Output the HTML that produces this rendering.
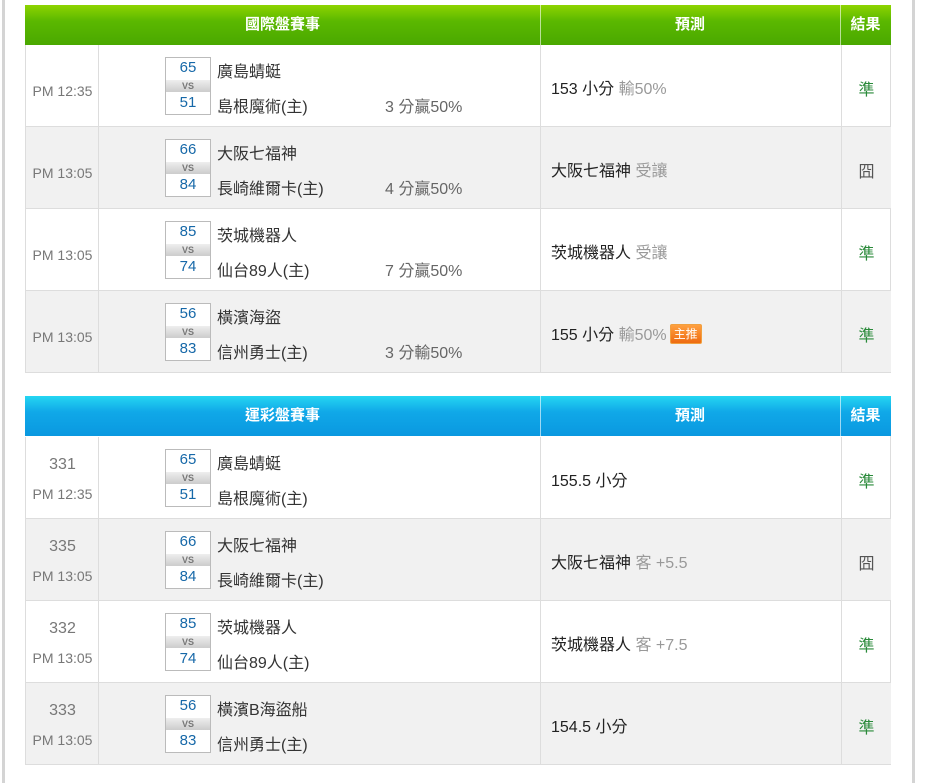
<!DOCTYPE html><html><head><meta charset="utf-8"><style>
body{margin:0;width:950px;height:783px;background:#fff;position:relative;overflow:hidden;font-family:"Liberation Sans","Noto Sans CJK TC",sans-serif;}
.vl{position:absolute;top:0;height:783px;width:3px;background:#d4d4d4}
.tbl{position:absolute;left:25px;width:865px;border-right:1px solid #ddd}
.hd{position:absolute;left:0;width:866px;height:40px;color:#fff;font-weight:bold;font-size:15px}
.hd div{position:absolute;top:0;height:40px;line-height:40px;text-align:center;border-right:1px solid rgba(255,255,255,.6)}
.g{background:linear-gradient(#8ed400 0,#5bb800 40%,#4aa800 100%)}
.b{background:linear-gradient(#25d6f2 0,#10a8e8 40%,#0a98e0 100%)}
.row{position:absolute;left:0;width:865px;height:81px;border-bottom:1px solid #ddd;border-left:1px solid #ddd}
.row.alt{background:#f1f1f1}
.c{position:absolute;top:0;height:81px;border-right:1px solid #ddd}
.tm{position:absolute;left:0;width:73px;text-align:center;color:#777;font-size:14px}
.box{position:absolute;left:139px;top:12px;width:44px;height:56px;border:1px solid #bbb;background:#fff}
.s{position:absolute;left:0;width:44px;height:20px;text-align:center;color:#1668a8;font-size:15px;line-height:20px}
.vs{position:absolute;left:0;top:22px;width:44px;height:12px;background:linear-gradient(#eee,#ccc);color:#777;font-size:9px;font-weight:bold;text-align:center;line-height:12px}
.nm{position:absolute;left:191px;font-size:16px;color:#333}
.hc{position:absolute;left:359px;font-size:16px;color:#666}
.pr{position:absolute;left:525px;font-size:16px;color:#222;top:30px}
.pr span{color:#999}
.rs{position:absolute;left:816px;width:49px;text-align:center;top:31px;font-size:16px}
.ok{color:#2a8a3a}.bad{color:#555}
.pr .tag{display:inline-block;background:linear-gradient(#ffa040,#ee6a10);color:#fff;font-size:12px;padding:0 3px;border-radius:2px;line-height:18px;vertical-align:2px;margin-left:3px;border:1px solid #f0a040}
</style></head><body>
<div class="vl" style="left:2px"></div><div class="vl" style="left:912px"></div>

<div class="tbl" style="top:5px;height:368px">
<div class="hd g" style="top:0"><div style="left:0;width:515px">國際盤賽事</div><div style="left:515px;width:300px">預測</div><div style="left:816px;width:49px;border:none">結果</div></div>
</div>

<div class="tbl" style="top:396px;height:369px">
<div class="hd b" style="top:0"><div style="left:0;width:515px">運彩盤賽事</div><div style="left:515px;width:300px">預測</div><div style="left:816px;width:49px;border:none">結果</div></div>
</div>

<div class="row" style="top:45px;left:25px"><div class="c" style="left:0;width:72px"></div><div class="c" style="left:0;width:514px"></div><div class="c" style="left:0;width:815px"></div>
<div class="tm" style="top:38px">PM 12:35</div>
<div class="box"><div class="s" style="top:0">65</div><div class="vs">VS</div><div class="s" style="top:35px">51</div></div>
<div class="nm" style="top:13px">廣島蜻蜓</div><div class="nm" style="top:48px">島根魔術(主)</div><div class="hc" style="top:48px">3 分贏50%</div>
<div class="pr">153 小分 <span>輸50%</span></div><div class="rs ok">準</div></div>

<div class="row alt" style="top:127px;left:25px"><div class="c" style="left:0;width:72px"></div><div class="c" style="left:0;width:514px"></div><div class="c" style="left:0;width:815px"></div>
<div class="tm" style="top:38px">PM 13:05</div>
<div class="box"><div class="s" style="top:0">66</div><div class="vs">VS</div><div class="s" style="top:35px">84</div></div>
<div class="nm" style="top:13px">大阪七福神</div><div class="nm" style="top:48px">長崎維爾卡(主)</div><div class="hc" style="top:48px">4 分贏50%</div>
<div class="pr">大阪七福神 <span>受讓</span></div><div class="rs bad">囧</div></div>

<div class="row" style="top:209px;left:25px"><div class="c" style="left:0;width:72px"></div><div class="c" style="left:0;width:514px"></div><div class="c" style="left:0;width:815px"></div>
<div class="tm" style="top:38px">PM 13:05</div>
<div class="box"><div class="s" style="top:0">85</div><div class="vs">VS</div><div class="s" style="top:35px">74</div></div>
<div class="nm" style="top:13px">茨城機器人</div><div class="nm" style="top:48px">仙台89人(主)</div><div class="hc" style="top:48px">7 分贏50%</div>
<div class="pr">茨城機器人 <span>受讓</span></div><div class="rs ok">準</div></div>

<div class="row alt" style="top:291px;left:25px"><div class="c" style="left:0;width:72px"></div><div class="c" style="left:0;width:514px"></div><div class="c" style="left:0;width:815px"></div>
<div class="tm" style="top:38px">PM 13:05</div>
<div class="box"><div class="s" style="top:0">56</div><div class="vs">VS</div><div class="s" style="top:35px">83</div></div>
<div class="nm" style="top:13px">橫濱海盜</div><div class="nm" style="top:48px">信州勇士(主)</div><div class="hc" style="top:48px">3 分輸50%</div>
<div class="pr">155 小分 <span>輸50%</span><span class="tag">主推</span></div><div class="rs ok">準</div></div>

<div class="row" style="top:437px;left:25px"><div class="c" style="left:0;width:72px"></div><div class="c" style="left:0;width:514px"></div><div class="c" style="left:0;width:815px"></div>
<div class="tm" style="top:19px;font-size:16px">331</div><div class="tm" style="top:49px">PM 12:35</div>
<div class="box"><div class="s" style="top:0">65</div><div class="vs">VS</div><div class="s" style="top:35px">51</div></div>
<div class="nm" style="top:13px">廣島蜻蜓</div><div class="nm" style="top:48px">島根魔術(主)</div>
<div class="pr">155.5 小分</div><div class="rs ok">準</div></div>

<div class="row alt" style="top:519px;left:25px"><div class="c" style="left:0;width:72px"></div><div class="c" style="left:0;width:514px"></div><div class="c" style="left:0;width:815px"></div>
<div class="tm" style="top:19px;font-size:16px">335</div><div class="tm" style="top:49px">PM 13:05</div>
<div class="box"><div class="s" style="top:0">66</div><div class="vs">VS</div><div class="s" style="top:35px">84</div></div>
<div class="nm" style="top:13px">大阪七福神</div><div class="nm" style="top:48px">長崎維爾卡(主)</div>
<div class="pr">大阪七福神 <span>客 +5.5</span></div><div class="rs bad">囧</div></div>

<div class="row" style="top:601px;left:25px"><div class="c" style="left:0;width:72px"></div><div class="c" style="left:0;width:514px"></div><div class="c" style="left:0;width:815px"></div>
<div class="tm" style="top:19px;font-size:16px">332</div><div class="tm" style="top:49px">PM 13:05</div>
<div class="box"><div class="s" style="top:0">85</div><div class="vs">VS</div><div class="s" style="top:35px">74</div></div>
<div class="nm" style="top:13px">茨城機器人</div><div class="nm" style="top:48px">仙台89人(主)</div>
<div class="pr">茨城機器人 <span>客 +7.5</span></div><div class="rs ok">準</div></div>

<div class="row alt" style="top:683px;left:25px"><div class="c" style="left:0;width:72px"></div><div class="c" style="left:0;width:514px"></div><div class="c" style="left:0;width:815px"></div>
<div class="tm" style="top:19px;font-size:16px">333</div><div class="tm" style="top:49px">PM 13:05</div>
<div class="box"><div class="s" style="top:0">56</div><div class="vs">VS</div><div class="s" style="top:35px">83</div></div>
<div class="nm" style="top:13px">橫濱B海盜船</div><div class="nm" style="top:48px">信州勇士(主)</div>
<div class="pr">154.5 小分</div><div class="rs ok">準</div></div>
</body></html>
